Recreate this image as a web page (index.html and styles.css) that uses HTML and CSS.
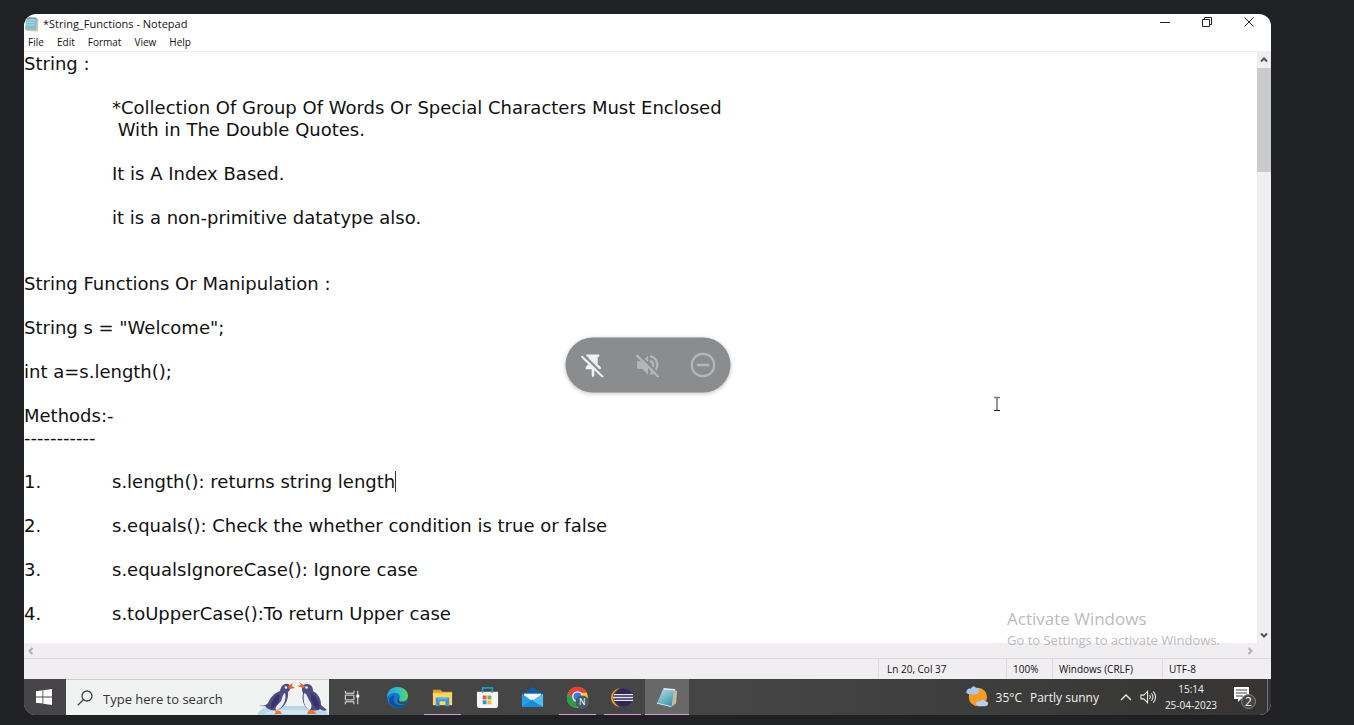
FILE: index.html
```html
<!DOCTYPE html>
<html lang="en">
<head>
<meta charset="utf-8">
<title>*String_Functions - Notepad</title>
<link rel="stylesheet" href="styles.css">
</head>
<body>
<main class="screen">
  <header class="titlebar">
    <svg class="app-icon" viewBox="0 0 16 16"><path d="M3 1.500 14.500 2.500 14 15.500 2 15z" fill="#d5c9a5"/><path d="M2.500 1.500 13 2 12 14 1 13.500z" fill="#83bed0"/><path d="M3 4h8M2.500 6.500h8M2.300 9h8" stroke="#a9dae5"/><path d="M3 1v2M5 1v2M7 1v2M9 1v2M11 1v2" stroke="#537888" stroke-width=".8"/></svg>
    <h1 class="title">*String_Functions - Notepad</h1>
    <div class="window-buttons">
      <button class="window-button" aria-label="Minimize"><svg viewBox="0 0 12 12"><path d="M1 6.500h10"/></svg></button>
      <button class="window-button" aria-label="Restore"><svg viewBox="0 0 12 12"><path d="M1.500 3.500h7v7h-7zM3.500 3.500v-2h7v7h-2"/></svg></button>
      <button class="window-button" aria-label="Close"><svg viewBox="0 0 12 12"><path d="m1.500 1.500 9 9m0-9-9 9"/></svg></button>
    </div>
  </header>
  <nav class="menubar">
    <button class="menu-item">File</button>
    <button class="menu-item">Edit</button>
    <button class="menu-item">Format</button>
    <button class="menu-item">View</button>
    <button class="menu-item">Help</button>
  </nav>
  <section class="workspace">
    <textarea class="editor" aria-label="Document text" spellcheck="false" wrap="off">String :

	*Collection Of Group Of Words Or Special Characters Must Enclosed
	 With in The Double Quotes.

	It is A Index Based.

	it is a non-primitive datatype also.


String Functions Or Manipulation :

String s = "Welcome";

int a=s.length();

Methods:-
-----------

1.	s.length(): returns string length

2.	s.equals(): Check the whether condition is true or false

3.	s.equalsIgnoreCase(): Ignore case

4.	s.toUpperCase():To return Upper case</textarea>
    <div class="scroll-y">
      <button class="scroll-arrow" aria-label="Scroll up"><svg viewBox="0 0 8 8"><path d="m1 5.500 3-3 3 3"/></svg></button>
      <div class="scroll-thumb"></div>
      <button class="scroll-arrow scroll-down" aria-label="Scroll down"><svg viewBox="0 0 8 8"><path d="m1 2.500 3 3 3-3"/></svg></button>
    </div>
    <span class="text-caret"></span>
    <svg class="pointer" viewBox="0 0 8 16"><path d="M1 1.500h6M4 1v14" stroke="#777" stroke-width="1.500"/><path d="M1 14.500h6" stroke="#222"/></svg>
    <div class="activate">
      <p class="activate-title">Activate Windows</p>
      <p class="activate-text">Go to Settings to activate Windows.</p>
    </div>
  </section>
  <div class="scroll-x">
    <button class="scroll-arrow faded" aria-label="Scroll left"><svg viewBox="0 0 8 8"><path d="m5.500 1-3 3 3 3"/></svg></button>
    <button class="scroll-arrow faded" aria-label="Scroll right"><svg viewBox="0 0 8 8"><path d="m2.500 1 3 3-3 3"/></svg></button>
  </div>
  <footer class="statusbar">
    <span class="status position">Ln 20, Col 37</span>
    <span class="status zoom">100%</span>
    <span class="status endings">Windows (CRLF)</span>
    <span class="status encoding">UTF-8</span>
  </footer>
  <div class="taskbar">
    <button class="start" aria-label="Start"><svg viewBox="0 0 16 16"><path d="M0 2.200 6.500 1.300v6.200H0zM7.300 1.200 16 0v7.500H7.300zM0 8.400h6.500v6.200L0 13.700zM7.300 8.400H16V16l-8.700-1.300z" fill="#fff"/></svg></button>
    <label class="search">
      <svg class="search-icon" viewBox="0 0 16 16"><circle cx="10" cy="6" r="5"/><path d="M6.500 9.500.8 15.200"/></svg>
      <input class="search-input" type="text" placeholder="Type here to search" aria-label="Type here to search">
      <svg class="penguins" viewBox="0 0 72 34">
        <path d="M0 34q3-8 16-9h38q15 1 18 9z" fill="#b9d9eb"/>
        <path d="M7 33q8-5 27-4 17-1 28 4z" fill="#d3e8f3"/>
        <path d="M2 24q6 2 9-2c2-5 6-10 12-12 1-5 4-8 8-7 4 1 3 6 0 8 1 8-4 17-12 18-5 1-9-1-11-4q-3 1-6-1z" fill="#514a82"/>
        <path d="M28 12c2 6-2 16-9 17-2-3 3-6 5-9 2-4 1-6 4-8z" fill="#eceef5"/>
        <path d="M22 13c-6 3-8 9-8 15 5-3 10-9 8-15z" fill="#393467"/>
        <path d="m31 5 5-3-1 3 3 2-6 1z" fill="#df672f"/><circle cx="29" cy="6.500" r="1.300" fill="#fff"/>
        <path d="m17 29 2 2-2 2h8l-2-3z" fill="#e87935"/>
        <path d="M46 12c-2-4-1-9 4-9 5 0 6 4 6 7 7 4 8 10 8 14l6 5q-3 2-7-1c-7 4-16 0-17-8-1-3 0-5 0-8z" fill="#514a82"/>
        <path d="M47 12c-1 8 0 14 6 17 3-4 1-7-1-10-2-4-2-6-5-7z" fill="#eceef5"/>
        <path d="M54 12c-1 7 2 13 8 17 1-7-2-14-8-17z" fill="#393467"/>
        <path d="m47 7-7-2 4-1-2-3 6 4z" fill="#df672f"/><circle cx="49.500" cy="6.500" r="1.300" fill="#fff"/>
        <path d="m52 29-2 4h10l-4-4z" fill="#e87935"/>
      </svg>
    </label>
    <div class="apps">
      <button class="app task-view" aria-label="Task View"><svg viewBox="0 0 24 24" fill="none" stroke="#eee"><path d="M4.500 5v2.500h9V5M4.500 19v-2.500h9V19M4.500 9.500h9v5h-9zM17.500 5v14"/><path d="M16 9h3v3h-3z" fill="#fff" stroke="none"/></svg></button>
      <button class="app" aria-label="Edge"><svg viewBox="0 0 24 24"><defs><linearGradient id="edge-top" x1="0" x2="1"><stop stop-color="#279ee0"/><stop offset=".55" stop-color="#2fc3c5"/><stop offset="1" stop-color="#65d550"/></linearGradient></defs><circle cx="12" cy="12" r="11" fill="#1677cb"/><path d="M1 12C1 5 6 1 12 1s11 4 11 9c0 4-3 6-6 6s-4-1-3-3c3-5-7-10-13-1z" fill="url(#edge-top)"/><path d="M9 10c-3 4 0 11 7 10 3 0 4-2 5-2-4 6-13 6-17 0-2-5 1-8 5-8z" fill="#0c4f9c"/><path d="M13.500 12c-1 3 1 5 4 5 2 0 4-1 5-2l-1.500 3c-5 2-10 0-9-4 0-1 1-2 1.500-2z" fill="#3f4346"/></svg></button>
      <button class="app running" aria-label="File Explorer"><svg viewBox="0 0 24 24"><path d="M2 4h8l2 2h10v4H2z" fill="#dba026"/><path d="M2 7h20v13H2z" fill="#ffd665"/><path d="M5 12h14v9h-4v-5H9v5H5z" fill="#3d97d3"/><path d="M7 12h10v2H7z" fill="#62b7e7"/></svg></button>
      <button class="app" aria-label="Microsoft Store"><svg viewBox="0 0 24 24"><path d="M1 6h22v14q0 3-3 3H4q-3 0-3-3z" fill="#f5f5f5"/><path d="M7 7V2h10v5" fill="none" stroke="#2197cc" stroke-width="1.700"/><path d="M7 10h4v4H7z" fill="#eb5634"/><path d="M12 10h4v4h-4z" fill="#7bb431"/><path d="M7 15h4v4H7z" fill="#1a9bdd"/><path d="M12 15h4v4h-4z" fill="#f8b728"/></svg></button>
      <button class="app" aria-label="Mail"><svg viewBox="0 0 24 24"><path d="M1 8 12 1l11 7v4H1z" fill="#145ca4"/><path d="M3 8h18v8H3z" fill="#f1f5f7"/><path d="m1 8 11 8 11-8v14H1z" fill="#299de5"/><path d="m1 22 11-8 11 8z" fill="#198bd9"/><path d="m12 15 11-7v14z" fill="#51bdf1"/></svg></button>
      <button class="app running" aria-label="Chrome"><svg viewBox="0 0 24 24"><circle cx="12" cy="12" r="11" fill="#f7c52d"/><path d="M2.500 6.500A11 11 0 0 1 22 7H12l-5 8z" fill="#e34435"/><path d="m2.500 6.500 5 8.500 5 3-1 5C1 22-1 13 2.500 6.500z" fill="#2d9c50"/><circle cx="12" cy="11" r="5.600" fill="#f5f6f7"/><circle cx="12" cy="11" r="4.200" fill="#387ce2"/><circle cx="17" cy="17" r="7" fill="#455b67"/><text class="chrome-badge" x="17" y="20" text-anchor="middle">N</text></svg></button>
      <button class="app running" aria-label="Eclipse"><svg viewBox="0 0 24 24"><path d="M9 2C-3 5-3 20 9 22-1 15 0 8 9 2z" fill="#f59a27"/><circle cx="13" cy="12" r="9.500" fill="#302858"/><path d="M3 9h20M2 12h21M3 15h20" stroke="#e8e8f2" stroke-width="1.500"/></svg></button>
      <button class="app running active" aria-label="Notepad"><svg viewBox="0 0 24 24"><defs><linearGradient id="note" x1="0" y1="0" x2=".6" y2="1"><stop stop-color="#c4e4ea"/><stop offset="1" stop-color="#3e98b1"/></linearGradient></defs><path d="m17 4 5 1-1 13-5 4z" fill="#c7bd9e"/><path d="m8 2 11 2-3 18L1 18z" fill="url(#note)"/><path d="m8 3 12 1" stroke="#eef" stroke-width="1.500"/><path d="m1 18 15 3.500" stroke="#d8e9e8"/></svg></button>
    </div>
    <div class="tray">
      <button class="weather"><svg class="weather-icon" viewBox="0 0 24 24"><circle cx="13" cy="12" r="10" fill="#f89b24"/><path d="M3 9q-4-1-2-4 1-3 4-2 3-5 6-1 5 0 3 4 0 3-4 3z" fill="#a9c7ef"/><path d="M14 22q-4-1-3-4 2-2 4-1 3-4 6 0 4 0 3 3 0 2-3 2z" fill="#b4cff2"/></svg><span>35°C</span><span>Partly sunny</span></button>
      <button class="tray-button chevron" aria-label="Show hidden icons"><svg viewBox="0 0 12 12" fill="none" stroke="#eee" stroke-width="1.300"><path d="m1 9 5-5 5 5"/></svg></button>
      <button class="tray-button speaker" aria-label="Volume"><svg viewBox="0 0 18 14" fill="none" stroke="#eee" stroke-width="1.100"><path d="M1 5h3l4-4v12L4 9H1zM10 5q2 2 0 4M12 3q3.500 4 0 8M14 1q5 6 0 12"/></svg></button>
      <button class="clock"><span>15:14</span><span>25-04-2023</span></button>
      <button class="notifications" aria-label="2 notifications"><svg viewBox="0 0 24 24"><path d="M1 2h15v12H8l-3 3v-3H1z" fill="#fff"/><path d="M3 5h11M3 8h11M3 11h7" stroke="#444"/><circle cx="15.500" cy="16.500" r="7" fill="#454545" stroke="#888"/><text class="notification-count" x="15.500" y="21" text-anchor="middle">2</text></svg></button>
      <span class="show-desktop"></span>
    </div>
  </div>
  <div class="tile-controls">
    <button class="tile-button" aria-label="Unpin"><svg viewBox="0 0 24 24"><path d="M5.500 2H18v2h-1.500v7.500l3 2.500v2h-6.200v6L12 24l-1.300-2v-6H5v-2l2.500-2.500V4h-2z" fill="#f1f1f1"/><path d="m2.500 2 20 20" stroke="#8b8c8e" stroke-width="2.200"/><path d="m1 3.500 20.500 20" stroke="#f1f1f1" stroke-width="2"/></svg></button>
    <button class="tile-button" aria-label="Mute" disabled><svg viewBox="0 0 24 24"><path d="M1.500 8.500h5L12 3v18l-5.500-5.500h-5z" fill="#b5b6b7"/><path d="M14 3.500a8.700 8.700 0 0 1 0 17M14 8a4.200 4.200 0 0 1 0 8" fill="none" stroke="#b5b6b7" stroke-width="2.300"/><path d="m2.500 1 20 20" stroke="#8b8c8e" stroke-width="2"/><path d="m1 2.500 21 21" stroke="#b5b6b7" stroke-width="2.200"/></svg></button>
    <button class="tile-button" aria-label="Remove" disabled><svg viewBox="0 0 24 24" fill="none" stroke="#b5b6b7" stroke-width="2.200"><circle cx="12" cy="12" r="10.800"/><path d="M6 12h12"/></svg></button>
  </div>
</main>
</body>
</html>
```
FILE: styles.css
```css
* { box-sizing: border-box; }
body {
  margin: 0;
  height: 100vh;
  padding: 14px 83px 10px 24px;
  background: #202124;
  font-family: "Open Sans", "Noto Sans", sans-serif;
  font-size: 11px;
  color: #111;
}
button {
  margin: 0;
  padding: 0;
  border: 0;
  background: none;
  color: inherit;
  font: inherit;
}
svg { display: block; flex: none; }
p, h1 { margin: 0; }

.screen {
  position: relative;
  display: flex;
  flex-direction: column;
  height: 100%;
  overflow: hidden;
  border-radius: 12px;
  background: #fff;
}

.titlebar { display: flex; align-items: center; height: 19px; }
.app-icon { width: 16px; height: 16px; }
.title { margin-left: 3px; font-size: 11px; font-weight: 400; }
.window-buttons { display: flex; align-self: flex-start; margin-left: auto; padding-right: 1px; }
.window-button { display: grid; place-items: center; width: 42px; height: 16px; }
.window-button svg { width: 12px; height: 12px; fill: none; stroke: #222; }

.menubar {
  display: flex;
  gap: 13px;
  height: 19px;
  padding-left: 4px;
  border-bottom: 1px solid #ececec;
  font-size: 10px;
}
.menu-item:nth-child(n) { min-width: 16px; }

.workspace { position: relative; display: flex; flex: 1; min-height: 0; }
.editor {
  flex: 1;
  padding: 1px 0 0;
  border: 0;
  outline: 0;
  resize: none;
  overflow: hidden;
  background: #fff;
  color: #111;
  font: 18px/22px "DejaVu Sans", sans-serif;
  tab-size: 88px;
}
.scroll-y { display: flex; flex-direction: column; width: 14px; background: #f0eef0; }
.scroll-arrow { display: grid; place-items: center; width: 14px; height: 16px; }
.scroll-arrow svg { width: 8px; height: 8px; fill: none; stroke: #555; stroke-width: 2; }
.scroll-thumb { height: 104px; background: #cbcbcb; }
.scroll-down { margin-top: auto; }
.text-caret { position: absolute; top: 419px; left: 371px; width: 1px; height: 21px; background: #333; }
.pointer { position: absolute; top: 344px; left: 969px; width: 8px; height: 16px; }
.activate { position: absolute; z-index: 1; right: 51px; bottom: -6px; color: #bbb; white-space: nowrap; }
.activate-title { font-size: 17px; line-height: 24px; }
.activate-text { font-size: 13px; line-height: 18px; }

.scroll-x {
  display: flex;
  justify-content: space-between;
  height: 16px;
  padding-right: 14px;
  border-bottom: 1px solid #dcdadc;
  background: #f0eef0;
}
.faded svg { stroke: #b0b0b0; }

.statusbar { display: flex; justify-content: flex-end; height: 20px; background: #f0eef0; font-size: 10px; line-height: 21px; }
.status { padding-left: 6px; border-left: 1px solid #dcdadc; white-space: nowrap; }
.position { width: 128px; padding-left: 8px; }
.zoom { width: 46px; }
.endings { width: 110px; }
.encoding { width: 109px; }

.taskbar { display: flex; height: 36px; background: linear-gradient(90deg, #464646, #444 60%, #353433); color: #f2f2f2; }
.start { display: grid; place-items: center; width: 42px; padding-right: 2px; background: #484548; }
.start svg { width: 16px; height: 16px; }
.search { display: flex; align-items: center; width: 263px; padding-left: 11px; border-top: 1px solid #ccc; background: #f1f2f2; }
.search-icon { width: 16px; height: 16px; fill: none; stroke: #444; stroke-width: 1.3; }
.search-input { flex: 1; min-width: 0; margin-left: 10px; padding: 2px 0 0; border: 0; outline: 0; background: none; font: 13px "Open Sans", sans-serif; }
.search-input::placeholder { color: #333; opacity: 1; }
.penguins { align-self: flex-end; width: 72px; height: 34px; }
.apps { display: flex; }
.app { display: grid; place-items: center; position: relative; width: 45px; }
.app svg { width: 23px; height: 23px; }
.task-view { width: 46px; }
.running::after { content: ""; position: absolute; right: 4px; bottom: 0; left: 4px; height: 1px; background: #d898dc; }
.active { width: 44px; background: #686868; }
.active::after { right: 0; left: 0; }
.chrome-badge { fill: #fff; font: 9px "Open Sans", sans-serif; }

.tray { display: flex; align-items: center; margin-left: auto; }
.weather { display: flex; align-items: center; gap: 8px; font-size: 12px; white-space: nowrap; }
.weather-icon { width: 22px; height: 22px; }
.tray-button { display: grid; place-items: center; }
.chevron { width: 22px; margin-left: 16px; }
.chevron svg { width: 12px; height: 12px; }
.speaker { width: 22px; }
.speaker svg { width: 17px; height: 14px; }
.clock { display: flex; flex-direction: column; align-items: center; width: 64px; font-size: 10px; line-height: 16px; }
.notifications { display: grid; place-items: center; width: 44px; }
.notifications svg { width: 24px; height: 24px; }
.notification-count { fill: #fff; font: 12px "Open Sans", sans-serif; }
.show-desktop { align-self: stretch; width: 4px; border-left: 1px solid #777; }

.tile-controls {
  position: absolute;
  top: 50%;
  left: 50%;
  z-index: 2;
  display: flex;
  border-radius: 28px;
  background: #8b8c8e;
  box-shadow: 0 1px 4px #0004;
  transform: translate(-50%, -50%);
}
.tile-button { display: grid; place-items: center; width: 55px; height: 55px; }
.tile-button svg { width: 25px; height: 25px; }
```
